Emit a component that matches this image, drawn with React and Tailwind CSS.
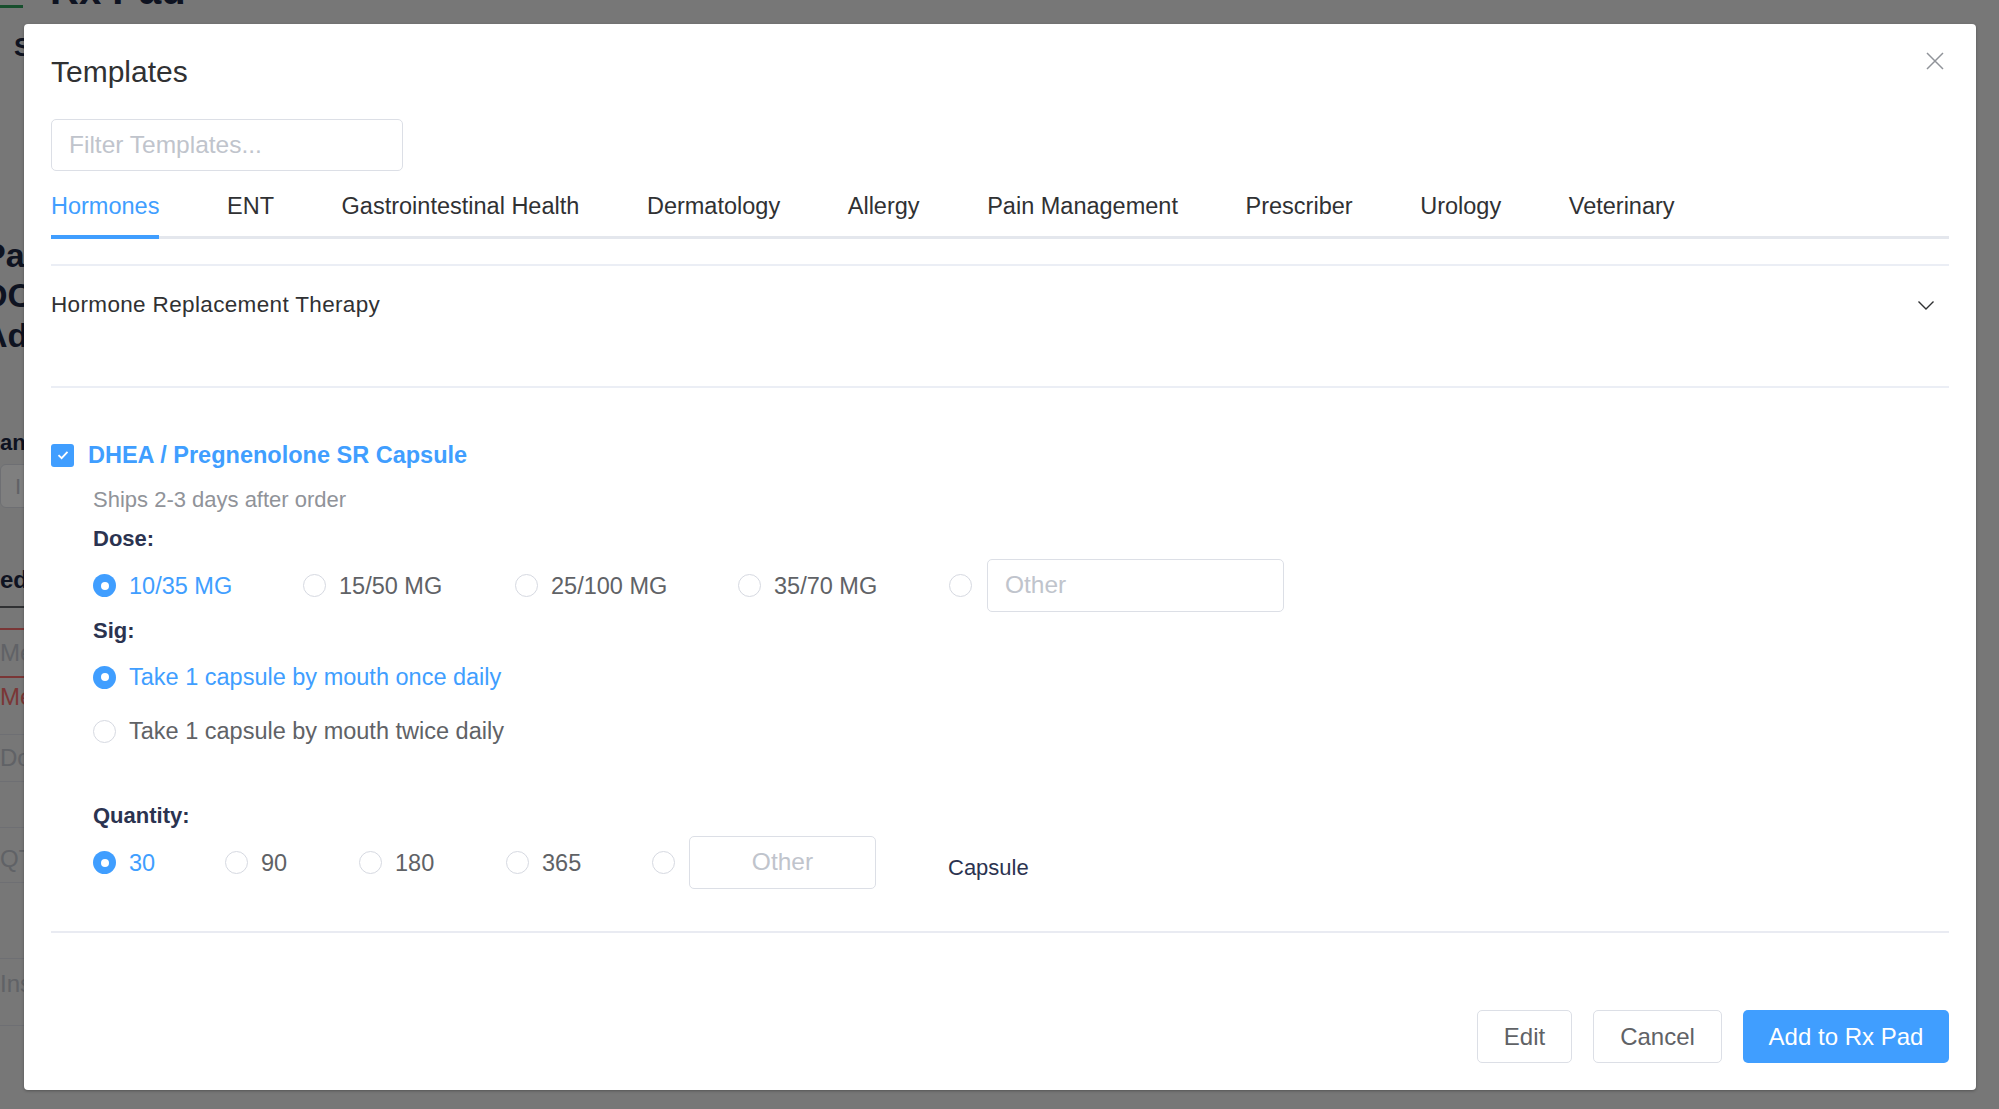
import { useState } from 'react'

const tabs = [
  'Hormones',
  'ENT',
  'Gastrointestinal Health',
  'Dermatology',
  'Allergy',
  'Pain Management',
  'Prescriber',
  'Urology',
  'Veterinary',
]

const doses = [
  { label: '10/35 MG', w: 'w-[210px]' },
  { label: '15/50 MG', w: 'w-[212px]' },
  { label: '25/100 MG', w: 'w-[223px]' },
  { label: '35/70 MG', w: 'w-[211px]' },
]

const sigs = ['Take 1 capsule by mouth once daily', 'Take 1 capsule by mouth twice daily']

const quantities = [
  { label: '30', w: 'w-[132px]' },
  { label: '90', w: 'w-[134px]' },
  { label: '180', w: 'w-[147px]' },
  { label: '365', w: 'w-[146px]' },
]

function Radio({ checked, label, className = '' }) {
  return (
    <div className={`flex items-center ${className}`}>
      {checked ? (
        <span className="flex h-[23px] w-[23px] shrink-0 items-center justify-center rounded-full bg-[#409eff]">
          <span className="h-[8px] w-[8px] rounded-full bg-white" />
        </span>
      ) : (
        <span className="h-[23px] w-[23px] shrink-0 rounded-full border-[1.5px] border-[#d6d9e1] bg-white" />
      )}
      {label && (
        <span className={`ml-[13px] text-[23.5px] leading-[26px] ${checked ? 'text-[#409eff]' : 'text-[#606266]'}`}>
          {label}
        </span>
      )}
    </div>
  )
}

function BackgroundPage() {
  return (
    <div className="flex h-full w-full flex-col bg-[#eeeeee]">
      <div className="flex h-[10px] items-end overflow-hidden">
        <div className="mb-[2px] h-[3px] w-[23px] bg-[#2f9e5a]" />
        <span className="ml-[27px] text-[40px] font-bold leading-[40px] text-[#1d2742]">Rx Pad</span>
      </div>
      <div className="mt-[24px] pl-[14px] text-[26px] font-bold leading-[26px] text-[#1d2742]">S</div>
      <div className="ml-[-17px] mt-[175px] text-[34px] font-bold leading-[40px] text-[#1d2742]">
        <div>Pa</div>
        <div>DC</div>
        <div>Ad</div>
      </div>
      <div className="mt-[75px] text-[22px] font-bold leading-[26px] text-[#1d2742]">an</div>
      <div className="mt-[8px] flex h-[44px] w-[200px] items-center rounded-[6px] border border-[#dcdfe6] bg-white pl-[14px] text-[22px] text-[#c0c4cc]">
        I
      </div>
      <div className="mt-[58px] text-[24px] font-bold leading-[28px] text-[#1d2742]">ed</div>
      <div className="mt-[12px] h-[2px] w-[300px] bg-[#606266]" />
      <div className="mt-[20px] h-[2px] w-[300px] bg-[#f56c6c]" />
      <div className="mt-[10px] text-[24px] leading-[26px] text-[#c0c4cc]">Me</div>
      <div className="mt-[10px] h-[2px] w-[300px] bg-[#f56c6c]" />
      <div className="mt-[6px] text-[24px] leading-[26px] text-[#f56c6c]">Me</div>
      <div className="mt-[24px] h-px w-[300px] bg-[#dcdfe6]" />
      <div className="mt-[10px] text-[24px] leading-[26px] text-[#c0c4cc]">Do</div>
      <div className="mt-[10px] h-px w-[300px] bg-[#dcdfe6]" />
      <div className="mt-[45px] h-px w-[300px] bg-[#dcdfe6]" />
      <div className="mt-[18px] text-[24px] leading-[26px] text-[#c0c4cc]">QT</div>
      <div className="mt-[10px] h-px w-[300px] bg-[#dcdfe6]" />
      <div className="mt-[75px] h-px w-[300px] bg-[#dcdfe6]" />
      <div className="mt-[12px] text-[24px] leading-[26px] text-[#c0c4cc]">Ins</div>
      <div className="mt-[28px] h-px w-[300px] bg-[#dcdfe6]" />
    </div>
  )
}

export default function App() {
  const [active] = useState(0)

  return (
    <div className="relative h-[1109px] w-[1999px] overflow-hidden font-['Liberation_Sans',Arial,sans-serif]">
      <BackgroundPage />
      <div className="absolute inset-0 bg-black/50" />

      <div className="absolute left-[24px] top-[24px] flex h-[1066px] w-[1952px] flex-col rounded-[4px] bg-white px-[27px] pt-[31px] shadow-[0_1px_3px_rgba(0,0,0,0.3)]">
        <h2 className="pt-[1px] text-[30px] leading-[32px] text-[#303133]">Templates</h2>
        <button className="absolute right-[32px] top-[28px] h-[18px] w-[18px]">
          <svg viewBox="0 0 18 18" className="h-[18px] w-[18px]" fill="none" stroke="#909399" strokeWidth="1.5">
            <path d="M1 1 L17 17 M17 1 L1 17" />
          </svg>
        </button>

        <div className="mt-[31px] flex h-[52px] w-[352px] items-center rounded-[5px] border-[1.5px] border-[#dcdfe6] px-[17px] text-[24.5px] text-[#c0c4cc]">
          Filter Templates...
        </div>

        <nav className="flex h-[68px] border-b-[3px] border-[#e4e7ed] pt-[7px]">
          {tabs.map((t, i) => (
            <div
              key={t}
              className={`relative flex h-full items-center text-[23.5px] ${i === 0 ? 'pr-[33.8px]' : 'px-[33.8px]'} ${
                i === active ? 'text-[#409eff]' : 'text-[#303133]'
              }`}
            >
              {t}
              {i === active && <span className="absolute bottom-[-3px] left-0 right-[33.8px] h-[4px] bg-[#409eff]" />}
            </div>
          ))}
        </nav>

        <div className="mt-[25px] border-y-2 border-[#ebeef5]">
          <div className="flex h-[120px] items-start justify-between pt-[26px]">
            <span className="text-[22.5px] leading-[26px] tracking-[0.35px] text-[#303133]">Hormone Replacement Therapy</span>
            <svg viewBox="0 0 16 9" className="mr-[15px] mt-[9px] h-[9px] w-[16px]" fill="none" stroke="#303133" strokeWidth="1.4">
              <path d="M0.5 0.5 L8 8 L15.5 0.5" />
            </svg>
          </div>
        </div>

        <div className="pt-[55px]">
          <div className="flex h-[24px] items-center">
            <span className="flex h-[23px] w-[23px] items-center justify-center rounded-[3px] bg-[#409eff]">
              <svg viewBox="0 0 14 14" className="h-[14px] w-[14px]" fill="none" stroke="white" strokeWidth="1.8">
                <path d="M2.5 7.2 L5.6 10.2 L11.5 3.8" />
              </svg>
            </span>
            <span className="ml-[14px] text-[23.5px] font-bold leading-[26px] text-[#409eff]">
              DHEA / Pregnenolone SR Capsule
            </span>
          </div>

          <div className="pl-[42px]">
            <div className="mt-[20px] text-[22px] leading-[26px] text-[#909399]">Ships 2-3 days after order</div>

            <div className="mt-[13px] text-[22px] font-bold leading-[26px] text-[#2b3350]">Dose:</div>
            <div className="mt-[7px] flex h-[53px] items-center">
              {doses.map((d, i) => (
                <Radio key={d.label} checked={i === 0} label={d.label} className={d.w} />
              ))}
              <Radio checked={false} />
              <div className="ml-[15px] flex h-[53px] w-[297px] items-center rounded-[5px] border-[1.5px] border-[#dcdfe6] px-[17px] text-[24.5px] text-[#c0c4cc]">
                Other
              </div>
            </div>

            <div className="mt-[6px] text-[22px] font-bold leading-[26px] text-[#2b3350]">Sig:</div>
            <Radio checked label={sigs[0]} className="mt-[20px]" />
            <Radio checked={false} label={sigs[1]} className="mt-[28px]" />

            <div className="mt-[59px] text-[22px] font-bold leading-[26px] text-[#2b3350]">Quantity:</div>
            <div className="mt-[7px] flex h-[53px] items-center">
              {quantities.map((q, i) => (
                <Radio key={q.label} checked={i === 0} label={q.label} className={q.w} />
              ))}
              <Radio checked={false} />
              <div className="ml-[14px] flex h-[53px] w-[187px] items-center justify-center rounded-[5px] border-[1.5px] border-[#dcdfe6] text-[24.5px] text-[#c0c4cc]">
                Other
              </div>
              <span className="ml-[72px] pt-[10px] text-[22px] leading-[26px] text-[#2b3350]">Capsule</span>
            </div>
          </div>
        </div>

        <div className="mt-[42px] h-[2px] w-full bg-[#e9ebf2]" />

        <div className="mt-[77px] flex justify-end gap-[21px]">
          <button className="h-[53px] w-[95px] rounded-[5px] border-[1.5px] border-[#dcdfe6] bg-white text-[24px] text-[#606266]">
            Edit
          </button>
          <button className="h-[53px] w-[129px] rounded-[5px] border-[1.5px] border-[#dcdfe6] bg-white text-[24px] text-[#606266]">
            Cancel
          </button>
          <button className="h-[53px] w-[206px] rounded-[5px] bg-[#409eff] text-[24px] text-white">Add to Rx Pad</button>
        </div>
      </div>
    </div>
  )
}
